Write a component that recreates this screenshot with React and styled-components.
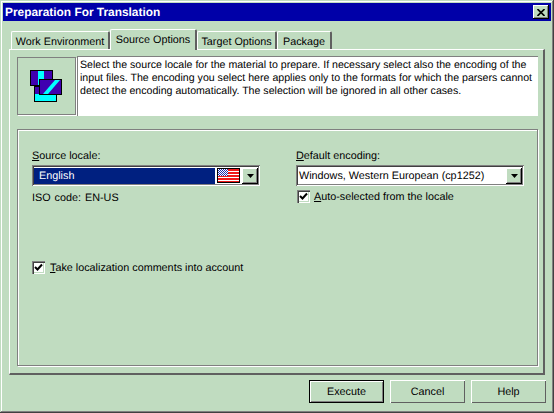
import React from "react";
import styled, { createGlobalStyle } from "styled-components";

const Global = createGlobalStyle`
  html, body { margin: 0; padding: 0; background: #c0dcc0; }
  * { box-sizing: border-box; }
`;

const Win = styled.div`
  width: 554px; height: 413px; padding: 3px;
  background: #c0dcc0; color: #000;
  font: 10.8px/13px "Liberation Sans", Arial, sans-serif;
  text-rendering: geometricPrecision;
  box-shadow: inset -1px -1px 0 #404040, inset 1px 1px 0 #c0dcc0, inset -2px -2px 0 #808080, inset 2px 2px 0 #fff;
  display: flex; flex-direction: column; overflow: hidden;
`;
const TitleBar = styled.div`
  height: 18px; flex: none; background: #0000a8; color: #fff;
  display: flex; align-items: center; justify-content: space-between;
  padding: 0 2px;
`;
const TitleText = styled.span`
  font: bold 11.9px/18px "Liberation Sans", Arial, sans-serif;
`;
const CloseBtn = styled.div`
  width: 16px; height: 14px; background: #c0dcc0; color: #000;
  box-shadow: inset -1px -1px 0 #000, inset 1px 1px 0 #fff, inset -2px -2px 0 #808080;
  display: flex; align-items: center; justify-content: center;
`;
const TabRow = styled.div`
  display: flex; align-items: flex-end; height: 20px; margin: 8px 0 0 8px;
  position: relative; z-index: 1; flex: none;
`;
const Tab = styled.div`
  height: ${p => (p.$active ? "21px" : "18px")};
  width: ${p => p.$w}px;
  margin-bottom: ${p => (p.$active ? "-1px" : "0")};
  padding-top: 3.5px;
  text-align: center; white-space: nowrap;
  background: #c0dcc0;
  border-top: 1px solid #fff; border-left: 1px solid #fff;
  border-right: 2px solid #606060;
  border-radius: 2px 2px 0 0;
`;
const Panel = styled.div`
  width: 536px; height: 326px; margin-left: 6px; padding: 6px 7px; flex: none;
  border-top: 1px solid #fff; border-left: 1px solid #fff;
  border-right: 2px solid #606060; border-bottom: 2px solid #606060;
  display: flex; flex-direction: column;
`;
const Intro = styled.div`
  display: flex; height: 60px; flex: none; width: 521px;
`;
const IconBox = styled.div`
  width: 59px; height: 58px; flex: none; margin: 1px 1px 0 0;
  border: 1px solid #808080;
  box-shadow: 1px 1px 0 #fff;
  display: flex; align-items: center; justify-content: center;
`;
const IntroText = styled.div`
  flex: 1; background: #fff; padding: 2px 2px 0 2px; white-space: nowrap; font-size: 10.6px;
  border-top: 1px solid #808080; border-left: 1px solid #808080;
`;
const Group = styled.div`
  width: 521px; height: 237px; margin-top: 13px; flex: none;
  border: 1px solid #808080; box-shadow: 1px 1px 0 #fff, inset 1px 1px 0 #fff;
  padding: 20px 13px 0 14px;
`;
const Columns = styled.div`
  display: grid; grid-template-columns: 228px 228px; column-gap: 36px;
`;
const Col = styled.div`display: flex; flex-direction: column;`;
const Label = styled.div`height: 15px;`;
const Combo = styled.div`
  width: 228px; height: 21px; background: #fff; display: flex; align-items: center;
  padding: 2px; box-shadow: inset 1px 1px 0 #808080, inset -1px -1px 0 #fff, inset 2px 2px 0 #404040, inset -2px -2px 0 #808080;
`;
const ComboValue = styled.div`
  flex: 1; height: 16px; padding-left: ${p => (p.$sel ? "5px" : "1px")}; line-height: 16px; white-space: nowrap;
  background: ${p => (p.$sel ? "#002080" : "#fff")}; color: ${p => (p.$sel ? "#fff" : "#000")};
`;
const FlagBox = styled.div`
  width: 27px; height: 16px; flex: none; display: flex; align-items: center; padding-left: 2px;
  background: #fff;
`;
const Drop = styled.div`
  width: 16px; height: 16px; flex: none; background: #c0dcc0; display: flex; align-items: center; justify-content: center;
  box-shadow: inset -1px -1px 0 #000, inset 1px 1px 0 #fff, inset -2px -2px 0 #808080;
`;
const Iso = styled.div`margin-top: 6px; word-spacing: 1px;`;
const CheckRow = styled.div`
  display: flex; align-items: center; gap: ${p => p.$gap || 5}px;
  margin-top: ${p => p.$mt || 0}px; margin-left: ${p => p.$ml || 0}px;
`;
const CheckLabel = styled.span`padding-top: 2px;`;
const CheckBox = styled.div`
  width: 13px; height: 13px; background: #fff; flex: none; display: flex; align-items: center; justify-content: center;
  box-shadow: inset 1px 1px 0 #808080, inset 2px 2px 0 #404040, inset -1px -1px 0 #fff, inset -2px -2px 0 #c0dcc0;
`;
const Footer = styled.div`
  display: flex; justify-content: flex-end; gap: 6px; margin-top: 5px; padding-right: 5px; flex: none;
`;
const Button = styled.div`
  width: 75px; height: 23px; padding-top: 1px; display: flex; align-items: center; justify-content: center;
  border: ${p => (p.$def ? "1px solid #000" : "0")};
  box-shadow: inset 1px 1px 0 #fff, inset -1px -1px 0 ${p => (p.$def ? "#808080" : "#606060")};
`;

const Check = () => (
  <svg width="9" height="9" viewBox="0 0 9 9"><path d="M1 4 L3.5 6.5 L8 1.5" fill="none" stroke="#000" strokeWidth="2"/></svg>
);
const Arrow = () => (
  <svg width="7" height="4" viewBox="0 0 7 4"><path d="M0 0H7L3.5 4Z" fill="#000"/></svg>
);
const Flag = () => (
  <svg width="23" height="15" viewBox="0 0 23 15" shapeRendering="crispEdges" style={{ flex: "none" }}>
    <rect x="0" y="0" width="23" height="15" fill="#000"/>
    <rect x="1" y="1" width="21" height="13" fill="#fff"/>
    {[1, 4, 7, 10, 13].map(y => <rect key={y} x="1" y={y} width="21" height={y === 13 ? 1 : 2} fill="#f01818"/>)}
    <rect x="1" y="1" width="10" height="7" fill="#2030b0"/>
    {[1, 3, 5, 7].flatMap(y => [1, 3, 5, 7, 9].map(x => <rect key={x + "-" + y} x={x} y={y} width="1" height="1" fill="#fff"/>))}
    {[2, 4, 6].flatMap(y => [2, 4, 6, 8, 10].map(x => <rect key={x + "_" + y} x={x} y={y} width="1" height="1" fill="#fff"/>))}
  </svg>
);
const Icon = () => (
  <svg width="34" height="33" viewBox="0 0 34 33" shapeRendering="crispEdges">
    <rect x="0.5" y="0.5" width="22" height="15" fill="#4000b0" stroke="#000"/>
    <rect x="8" y="1" width="6" height="14" fill="#00ffff"/>
    <rect x="4.5" y="16.5" width="22" height="15" fill="#00ffff" stroke="#000"/>
    <rect x="5" y="17" width="21" height="7" fill="#4000b0"/>
    <rect x="9.5" y="9.5" width="22" height="15" fill="#4000b0" stroke="#000"/>
    <path d="M13 24 L25 10 H30 L18 24Z" fill="#00ffff" shapeRendering="auto"/>
  </svg>
);

export default function App() {
  return (
    <Win>
      <Global />
      <TitleBar>
        <TitleText>Preparation For Translation</TitleText>
        <CloseBtn>
          <svg width="8" height="7" viewBox="0 0 8 7"><path d="M0.5 0 L7.5 7 M7.5 0 L0.5 7" stroke="#000" strokeWidth="1.6"/></svg>
        </CloseBtn>
      </TitleBar>
      <TabRow>
        <Tab $w={99}>Work Environment</Tab>
        <Tab $w={87} $active>Source Options</Tab>
        <Tab $w={80}>Target Options</Tab>
        <Tab $w={55}>Package</Tab>
      </TabRow>
      <Panel>
        <Intro>
          <IconBox><Icon /></IconBox>
          <IntroText>
            Select the source locale for the material to prepare. If necessary select also the encoding of the<br />
            input files. The encoding you select here applies only to the formats for which the parsers cannot<br />
            detect the encoding automatically. The selection will be ignored in all other cases.
          </IntroText>
        </Intro>
        <Group>
          <Columns>
            <Col>
              <Label><u>S</u>ource locale:</Label>
              <Combo>
                <ComboValue $sel>English</ComboValue>
                <FlagBox><Flag /></FlagBox>
                <Drop><Arrow /></Drop>
              </Combo>
              <Iso>ISO code: EN-US</Iso>
              <CheckRow $mt={55}><CheckBox><Check /></CheckBox><CheckLabel><u>T</u>ake localization comments into account</CheckLabel></CheckRow>
            </Col>
            <Col>
              <Label><u>D</u>efault encoding:</Label>
              <Combo>
                <ComboValue>Windows, Western European (cp1252)</ComboValue>
                <Drop><Arrow /></Drop>
              </Combo>
              <CheckRow $mt={3} $ml={1} $gap={4}><CheckBox><Check /></CheckBox><CheckLabel><u>A</u>uto-selected from the locale</CheckLabel></CheckRow>
            </Col>
          </Columns>
        </Group>
      </Panel>
      <Footer>
        <Button $def>Execute</Button>
        <Button>Cancel</Button>
        <Button>Help</Button>
      </Footer>
    </Win>
  );
}
